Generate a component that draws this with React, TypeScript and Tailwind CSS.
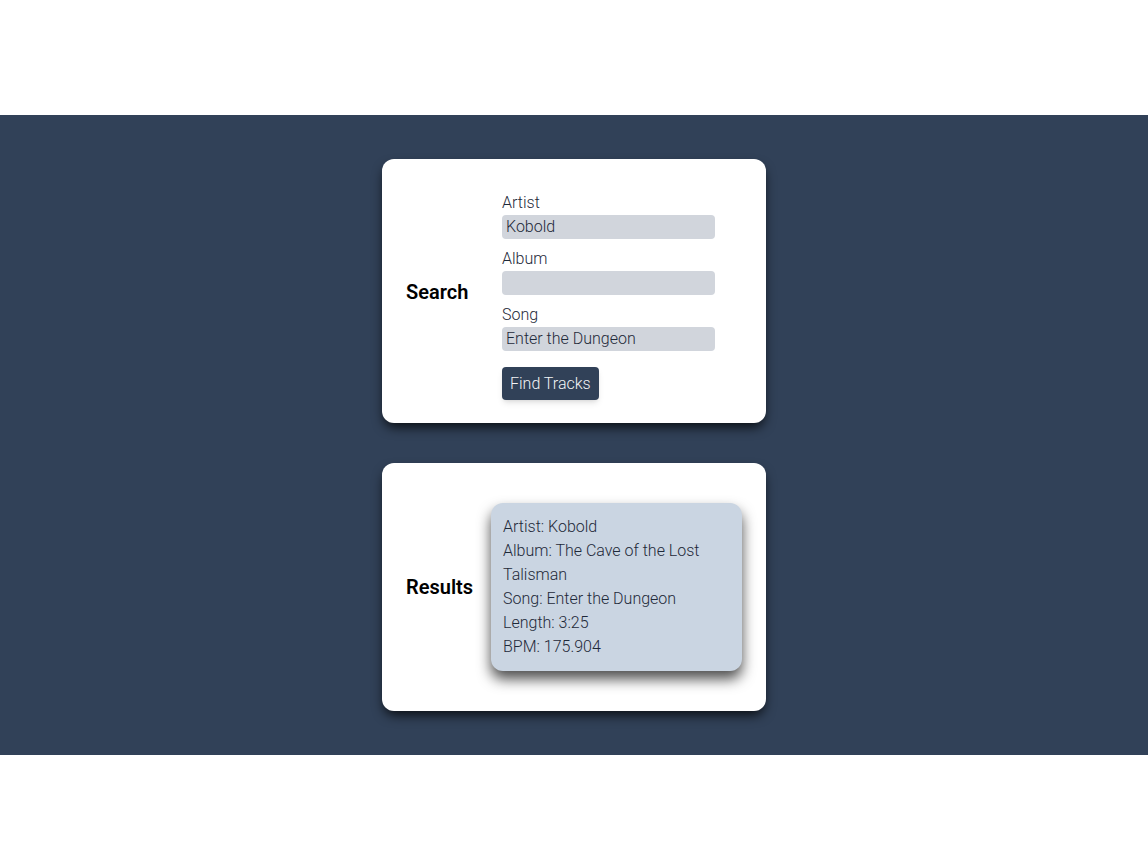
import React from "react"

const font = { fontFamily: "Roboto, 'Open Sans', sans-serif" }

function Field({ label, value }: { label: string; value: string }) {
  return (
    <div className="flex flex-col">
      <label className="text-base leading-6 font-light text-gray-800">{label}</label>
      <input
        readOnly
        value={value}
        className="h-6 w-[213px] rounded bg-gray-300 px-1 text-base font-light text-gray-800 outline-none"
      />
    </div>
  )
}

export default function App() {
  return (
    <div className="min-h-screen bg-white" style={font}>
      <div className="h-[115px]" />
      <main className="flex flex-col items-center gap-10 bg-slate-700 pt-11 pb-11">
        {/* Search card */}
        <section className="flex w-96 items-center rounded-xl bg-white px-6 pt-6 pb-[23px] shadow-[0_6px_12px_-2px_rgba(0,0,0,0.8)]">
          <h2 className="w-24 text-xl font-semibold text-black">Search</h2>
          <form className="flex flex-col gap-2 pt-2">
            <Field label="Artist" value="Kobold" />
            <Field label="Album" value="" />
            <Field label="Song" value="Enter the Dungeon" />
            <div className="pt-2">
              <button
                type="button"
                className="h-[33px] rounded bg-slate-700 px-2 text-base font-light text-gray-100 shadow-md"
              >
                Find Tracks
              </button>
            </div>
          </form>
        </section>

        {/* Results card */}
        <section className="flex w-96 items-center rounded-xl bg-white px-6 py-10 shadow-[0_6px_12px_-2px_rgba(0,0,0,0.8)]">
          <h2 className="w-[85px] shrink-0 text-xl font-semibold text-black">Results</h2>
          <div className="flex-1 rounded-xl bg-slate-300 p-3 text-base leading-6 font-light text-gray-800 shadow-[0_8px_14px_rgba(0,0,0,0.7)]">
            <p>Artist: Kobold</p>
            <p>Album: The Cave of the Lost Talisman</p>
            <p>Song: Enter the Dungeon</p>
            <p>Length: 3:25</p>
            <p>BPM: 175.904</p>
          </div>
        </section>
      </main>
    </div>
  )
}
